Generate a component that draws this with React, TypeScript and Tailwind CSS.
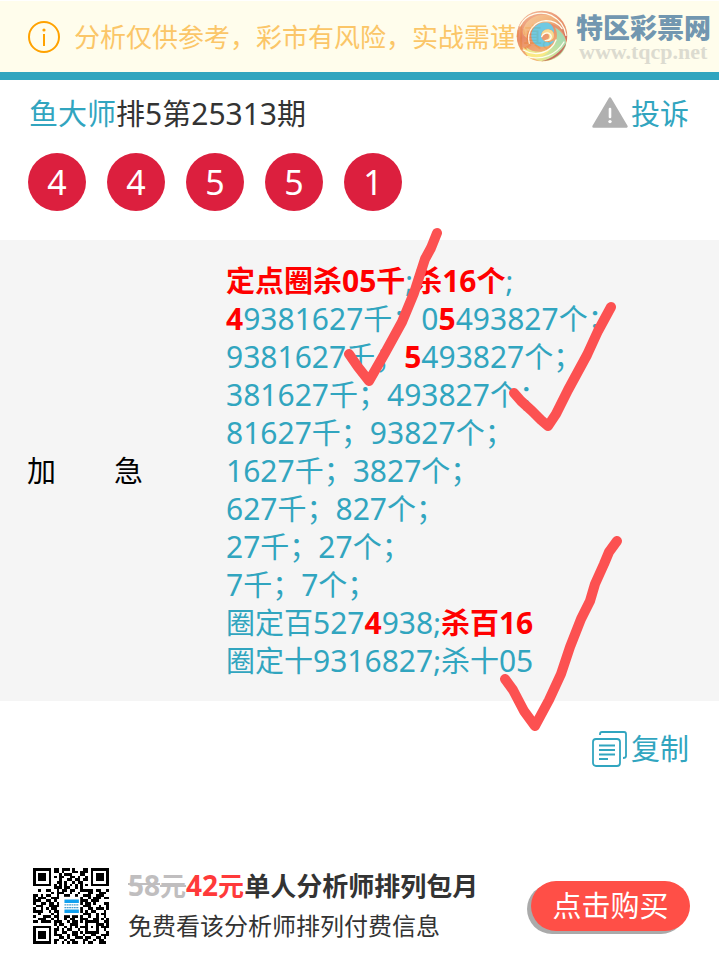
import type { ReactNode } from "react";

const QR_ROWS = [
  "11111110110111010001101111111",
  "10000010110100011011101000001",
  "10111010001011100011001011101",
  "10111010101100110100101011101",
  "10111010001001101101101011101",
  "10000010011010010110001000001",
  "11111110101010101010101111111",
  "00000000111011001010000000000",
  "00100110010110110011111011001",
  "00000001011100100100011001110",
  "11010110010011001001110011100",
  "10111001110000000010010111011",
  "11100110100000000011101110000",
  "10011011010000000010110100011",
  "01110011110000000101110001001",
  "10010101100000000110011011101",
  "11110010110000000010101100010",
  "00100001010000000001110010110",
  "10001110110011011010010010010",
  "00111001010010110011100110101",
  "11011110111001011010111110011",
  "00000000101100111000100011101",
  "11111110010010101011101010111",
  "10000010110101100100100010010",
  "10111010100110011010111110001",
  "10111010111001011001001100111",
  "10111010001101001110110011010",
  "10000010110010110001100101100",
  "11111110100101011001011001110",
];

const Num = ({ children }: { children: ReactNode }) => (
  <span className="text-[30px]">{children}</span>
);

const Hit = ({ children }: { children: ReactNode }) => (
  <strong className="font-bold text-[#ff0000]">{children}</strong>
);

function InfoIcon() {
  return (
    <svg width="32" height="32" viewBox="0 0 32 32" fill="none" className="shrink-0" aria-hidden="true">
      <circle cx="16" cy="16" r="15" stroke="#ffa200" strokeWidth="2" />
      <circle cx="16" cy="9" r="1.6" fill="#ffa200" />
      <path d="M16 13v12" stroke="#ffa200" strokeWidth="2" />
    </svg>
  );
}

function WarningIcon() {
  return (
    <svg width="36" height="31" viewBox="0 0 36 31" className="mb-1" aria-hidden="true">
      <path
        d="M18 1.6 34.4 29.4H1.6z"
        fill="#b0b0b0"
        stroke="#b0b0b0"
        strokeWidth="2.6"
        strokeLinejoin="round"
      />
      <path d="M18 12v8" stroke="#fff" strokeWidth="2.6" strokeLinecap="round" />
      <circle cx="18" cy="24.6" r="1.7" fill="#fff" />
    </svg>
  );
}

function CopyIcon() {
  return (
    <svg width="36" height="36" viewBox="0 0 36 36" fill="none" stroke="#31a5bf" strokeWidth="1.8" aria-hidden="true">
      <path d="M8 4V3q0-2 2-2h22q2 0 2 2v22q0 2-3 2" />
      <rect x="1" y="8" width="27" height="27" rx="3" />
      <path d="M7 14.5h16M7 19h16M7 23.500h16M7 28h9" strokeWidth="2" />
    </svg>
  );
}

function SwirlLogo() {
  return (
    <svg width="52" height="52" viewBox="0 0 156 156" className="shrink-0 opacity-80" aria-hidden="true">
      <defs>
        <linearGradient id="outer" x1="0" y1="0" x2="0.4" y2="1">
          <stop offset="0" stopColor="#f3b08a" />
          <stop offset="0.5" stopColor="#e2714a" />
          <stop offset="1" stopColor="#f3a95c" />
        </linearGradient>
        <linearGradient id="inner" x1="0" y1="0" x2="1" y2="0.8">
          <stop offset="0" stopColor="#f5c08c" />
          <stop offset="0.5" stopColor="#f0a060" />
          <stop offset="1" stopColor="#c2483a" />
        </linearGradient>
        <linearGradient id="leaf" x1="0" y1="1" x2="1" y2="0">
          <stop offset="0" stopColor="#f8ea72" />
          <stop offset="0.5" stopColor="#b9dc8c" />
          <stop offset="1" stopColor="#76cbb4" />
        </linearGradient>
      </defs>
      <circle cx="78" cy="78" r="76" fill="url(#outer)" />
      <path d="M22 56C36 14 88 4 122 24c26 18 34 46 30 72-8-36-34-58-66-58-30 0-52 18-54 46-10-8-14-16-10-28z" fill="url(#inner)" />
      <path d="M30 112c30 24 74 14 88-14 8-16 6-34-2-46 24 14 36 34 34 54-8 28-36 48-70 48-24-2-40-18-50-42z" fill="url(#leaf)" />
      <path d="M20 112c30 24 66 20 90-6-12 28-40 42-68 38-10-8-18-20-22-32z" fill="#f9e56c" />
      <path d="M151 98c-8 30-34 54-76 56 32-8 58-26 76-56z" fill="#b94a3a" />
      <path d="M96 38c-30-4-52 16-50 42 2 24 28 36 50 28 10-4 16-10 19-17-14 9-32 7-38-7-5-14 5-26 19-26 10 0 16 5 18 12 2-16-6-27-18-32z" fill="#4dbde0" />
      <path d="M77 80c-2-14 8-23 20-22 14 2 20 14 15 27-8 10-22 11-30 6 14 0 20-8 16-16-4-7-14-6-21 5z" fill="#f7d47c" />
      <path d="M12 48C30 10 74 2 106 16c24 12 40 34 44 60M40 100c-10-34 14-66 50-68 22 0 38 10 48 24M22 120c38 22 84 8 98-30M34 140c44 12 88-6 110-44M88 92c16 0 22-12 14-20-10-8-22 0-25 8" fill="none" stroke="#fffdf0" strokeWidth="4" strokeLinecap="round" />
    </svg>
  );
}

function QrCode() {
  return (
    <svg width="76" height="76" viewBox="0 0 29 29" className="shrink-0" role="img" aria-label="QR">
      <g shapeRendering="crispEdges">
        {QR_ROWS.map((row, y) =>
          [...row].map((cell, x) =>
            cell === "1" ? <rect key={`${x}-${y}`} x={x} y={y} width="1" height="1" fill="#000" /> : null,
          ),
        )}
      </g>
      <rect x="11" y="11" width="7" height="7" fill="#fff" />
      <path d="M12 12h5.500v1.400H12zM12 15.800h5.500v1.400H12z" fill="#12a0ee" />
      <path d="M12 14.100h5.500M12 15.100h5.500" stroke="#4a9fd0" strokeWidth="0.500" strokeDasharray="0.700 0.200" />
    </svg>
  );
}

function TickMarks() {
  return (
    <svg
      width="719"
      height="959"
      viewBox="0 0 719 959"
      fill="none"
      stroke="#fc5151"
      strokeWidth="10"
      strokeLinecap="round"
      strokeLinejoin="round"
      className="pointer-events-none absolute top-0 left-0"
      aria-hidden="true"
    >
      <path d="M349 354 358 367 369 381 385 353 402 322 414 293 425 259 431 248 437 233" />
      <path d="M514 393 521 401 532 411 541 420 548 426 556 414 568 390 587 355 598 331 611 307" />
      <path d="M505 679 513 690 524 711 535 726 549 700 561 674 570 647 581 619 590 601 595 584 604 564 609 552 617 541" />
    </svg>
  );
}

const picks: ReactNode[] = [
  <><Hit>定点圈杀<Num>05</Num>千</Hit>;<Hit>杀<Num>16</Num>个</Hit>;</>,
  <><Num><Hit>4</Hit>9381627</Num>千；<Num>0<Hit>5</Hit>493827</Num>个；</>,
  <><Num>9381627</Num>千；<Num><Hit>5</Hit>493827</Num>个；</>,
  <><Num>381627</Num>千；<Num>493827</Num>个；</>,
  <><Num>81627</Num>千；<Num>93827</Num>个；</>,
  <><Num>1627</Num>千；<Num>3827</Num>个；</>,
  <><Num>627</Num>千；<Num>827</Num>个；</>,
  <><Num>27</Num>千；<Num>27</Num>个；</>,
  <><Num>7</Num>千；<Num>7</Num>个；</>,
  <>圈定百<Num>527<Hit>4</Hit>938</Num>;<Hit>杀百<Num>16</Num></Hit></>,
  <>圈定十<Num>9316827</Num>;杀十<Num>05</Num></>,
];

export default function App() {
  return (
    <div className="relative w-full overflow-hidden bg-white font-['Noto_Sans','Noto_Sans_CJK_SC',sans-serif] text-[29px] leading-[38px] text-[#333]">
      <header className="relative flex h-20 items-center gap-[14px] border-t border-b-8 border-t-white border-b-[#31a5bf] bg-[#fffdec] pl-7">
        <InfoIcon />
        <p className="text-[26px] whitespace-nowrap text-[#fbc668]">
          分析仅供参考，彩市有风险，实战需谨慎。
        </p>
        <div className="absolute top-[9px] right-2 flex items-center gap-2">
          <SwirlLogo />
          <div className="whitespace-nowrap">
            <div className="text-[27px] leading-8 font-black text-[#7297b0]">特区彩票网</div>
            <div className="pl-[3px] font-['Liberation_Serif',serif] text-[22px] leading-4 font-bold text-[#dcdbd0]">
              www.tqcp.net
            </div>
          </div>
        </div>
      </header>

      <main>
        <div className="flex items-center justify-between pt-[15px] pr-[30px] pl-[29px]">
          <h1>
            <a href="#master" className="text-[#31a5bf]">鱼大师</a>排<Num>5</Num>第<Num>25313</Num>期
          </h1>
          <a href="#complaint" className="flex items-center gap-[3px] text-[#31a5bf]">
            <WarningIcon />
            投诉
          </a>
        </div>

        <ul className="mt-5 flex gap-[21px] px-7">
          {[4, 4, 5, 5, 1].map((n, i) => (
            <li
              key={i}
              className="flex size-[58px] items-center justify-center rounded-full bg-[#dc1f3e] text-[34px] text-white"
            >
              {n}
            </li>
          ))}
        </ul>

        <section className="mt-[29px] flex items-center bg-[#f5f5f5] pt-[22px] pb-[21px] pl-[27px]">
          <h2 className="w-[199px] shrink-0 text-black">加　　急</h2>
          <div className="text-[#31a5bf]">
            {picks.map((line, i) => (
              <p key={i} className="h-[38px] whitespace-nowrap">{line}</p>
            ))}
          </div>
        </section>

        <div className="flex justify-end pt-[29px] pr-[30px]">
          <button type="button" className="flex items-center gap-[3px] text-[#31a5bf]">
            <CopyIcon />
            复制
          </button>
        </div>
      </main>

      <footer className="mt-[97px] flex items-center border-b border-[#33303b] pr-[29px] pb-4 pl-[33px]">
        <QrCode />
        <div className="ml-[19px] grow whitespace-nowrap">
          <p className="text-[26px] leading-10 font-bold">
            <del className="text-[#c0bebf]"><span className="text-[28px]">58</span>元</del>
            <span className="text-[#ff3a3a]"><span className="text-[28px]">42</span>元</span>
            单人分析师排列包月
          </p>
          <p className="text-2xl leading-10">免费看该分析师排列付费信息</p>
        </div>
        <button
          type="button"
          className="h-[50px] w-[159px] shrink-0 rounded-full bg-[#ff4f47] text-white shadow-[-4px_3px_0_#aaaaaa]"
        >
          点击购买
        </button>
      </footer>

      <TickMarks />
    </div>
  );
}
